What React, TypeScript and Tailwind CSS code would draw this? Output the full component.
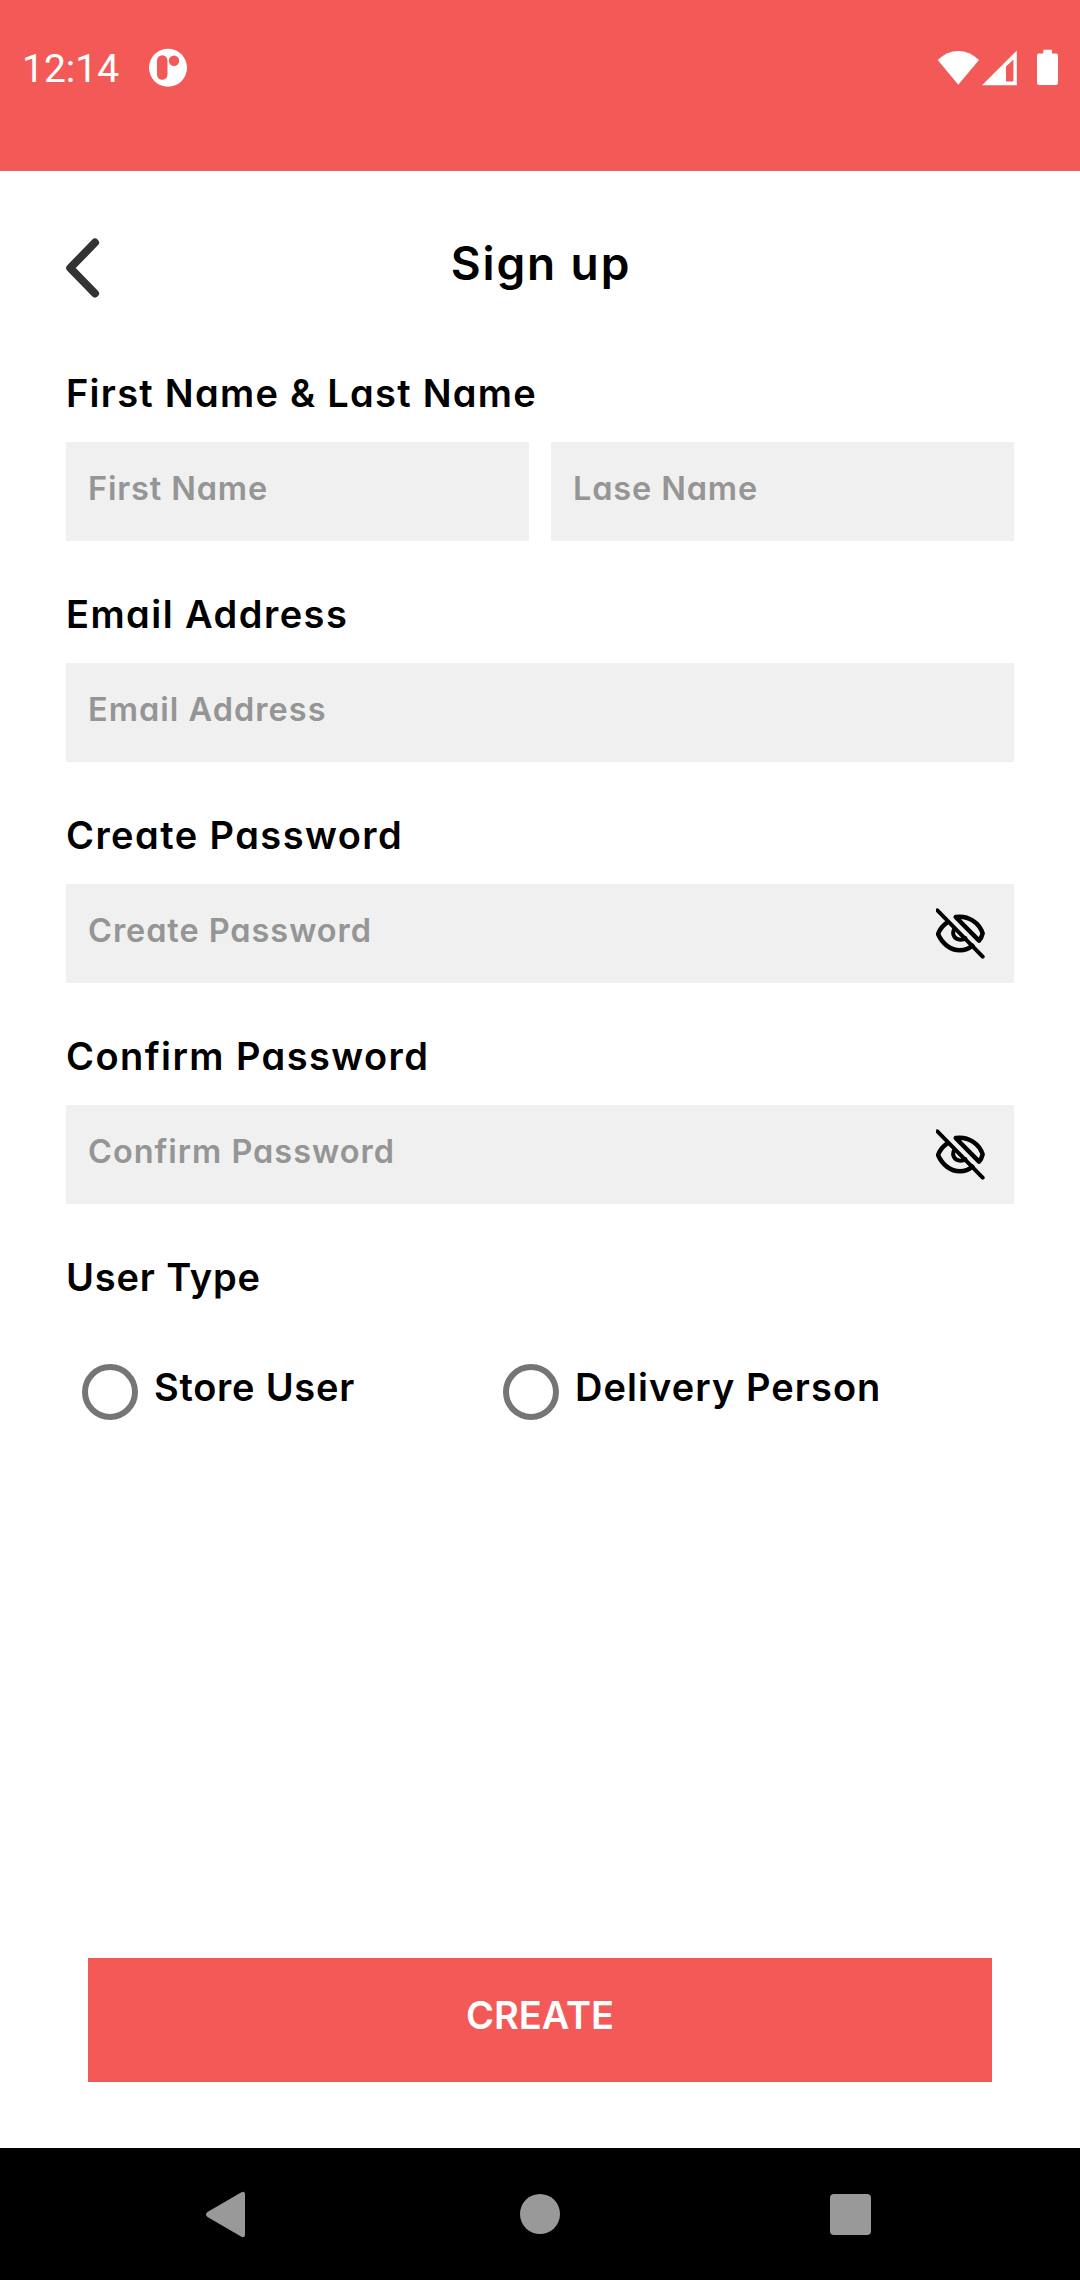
const labelBase = 'block h-14 text-[38px] leading-[56px] font-semibold text-black whitespace-nowrap';
const inputBase =
  'h-[99px] w-full min-w-0 bg-[#f0f0f0] px-[22px] pt-0 pb-[7px] text-[32.5px] font-semibold text-black placeholder:text-[#959595] placeholder:opacity-100 outline-none';

function EyeOff() {
  return (
    <svg width="50" height="52" viewBox="0 0 150 156" fill="none" stroke="#000" strokeWidth="13.5" strokeLinecap="round" strokeLinejoin="round">
      <path d="M34 43C21 52 11 64 6 78C19 108 44 127 72 127C87 127 99 122 109 113" />
      <path d="M59 27C98 21 130 45 140 76C138 85 135 92 129 98Z" />
      <path d="M55 62C46 79 56 95 73 95C80 95 85 93 88 90" strokeWidth="12" />
      <path d="M4 7L140 146" strokeWidth="12" />
    </svg>
  );
}

function Password({ label, placeholder, labelTrack, inputTrack }: { label: string; placeholder: string; labelTrack: string; inputTrack: string }) {
  return (
    <section className="flex flex-col gap-[21px]">
      <label className={`${labelBase} ${labelTrack}`}>{label}</label>
      <div className="flex h-[99px] items-center bg-[#f0f0f0] pr-[28px]">
        <input className={`${inputBase} ${inputTrack}`} placeholder={placeholder} type="text" />
        <button type="button" aria-label="Show password" className="shrink-0">
          <EyeOff />
        </button>
      </div>
    </section>
  );
}

function Radio({ text, track }: { text: string; track: string }) {
  return (
    <label className="flex w-[421px] items-center gap-4 pl-4">
      <span className="size-14 shrink-0 rounded-full border-6 border-[#757575]" />
      <span className={`${labelBase} -mt-[10px] ${track}`}>{text}</span>
    </label>
  );
}

export default function App() {
  return (
    <div className="flex h-[2280px] w-[1080px] flex-col bg-white font-[Inter,sans-serif] [font-feature-settings:'cv11']">
      <header className="h-[171px] bg-[#f35a57]">
        <div className="flex h-[135px] items-center px-[22px]">
          <span className="mt-1 font-[Roboto,sans-serif] text-[39px] leading-none text-white">12:14</span>
          <svg className="ml-[29px]" width="40" height="40" viewBox="0 0 40 40">
            <circle cx="20" cy="19.8" r="19" fill="#fff" />
            <rect x="9" y="7.2" width="10.5" height="24.5" rx="5.25" fill="#f35a57" />
            <circle cx="26" cy="12.8" r="5.2" fill="#f35a57" />
          </svg>
          <svg className="ml-auto" width="122" height="40" viewBox="936 47.500 122 40" fill="#fff">
            <path d="M958.3 84.3L937.7 59.5Q947 50.500 958.3 50.500T979 59.5Z" />
            <path fillRule="evenodd" d="M982 84.7L1016.8 50V84.7ZM1006 81H1013.4V59L1006 66Z" />
            <path d="M1043.3 49.3H1052V53H1056Q1058 53 1058 55V82.5Q1058 84.5 1056 84.5H1039Q1037 84.5 1037 82.5V55Q1037 53 1039 53H1043.3Z" />
          </svg>
        </div>
      </header>

      <main className="flex flex-1 flex-col px-[66px] pt-[56px]">
        <div className="grid h-16 grid-cols-[1fr_auto_1fr] items-center">
          <svg className="mt-[11px]" width="34" height="60" viewBox="0 0 34 60" fill="none" stroke="#333" strokeWidth="8" strokeLinecap="round" strokeLinejoin="round">
            <path d="M29 4.5L4.2 30L29 55.5" />
          </svg>
          <h1 className="pl-[2px] text-[46px] leading-[64px] font-semibold tracking-[1.88px] text-black">Sign up</h1>
        </div>

        <form className="mt-[74px] flex flex-1 flex-col gap-[45px]">
          <section className="flex flex-col gap-[21px]">
            <label className={`${labelBase} tracking-[1.27px]`}>First Name &amp; Last Name</label>
            <div className="grid grid-cols-2 gap-[22px]">
              <input className={`${inputBase} tracking-[0.85px]`} placeholder="First Name" />
              <input className={`${inputBase} tracking-[0.85px]`} placeholder="Lase Name" />
            </div>
          </section>
          <section className="flex flex-col gap-[21px]">
            <label className={`${labelBase} tracking-[1.45px]`}>Email Address</label>
            <input className={`${inputBase} tracking-[1.02px]`} placeholder="Email Address" />
          </section>
          <Password label="Create Password" placeholder="Create Password" labelTrack="tracking-[1.43px]" inputTrack="tracking-[0.93px]" />
          <Password label="Confirm Password" placeholder="Confirm Password" labelTrack="tracking-[1.42px]" inputTrack="tracking-[0.97px]" />
          <section className="flex flex-col gap-[59px]">
            <span className={`${labelBase} tracking-[0.85px]`}>User Type</span>
            <div className="flex">
              <Radio text="Store User" track="tracking-[0.74px]" />
              <Radio text="Delivery Person" track="tracking-[1.06px]" />
            </div>
          </section>
          <button type="button" className="mx-[22px] mt-auto mb-[66px] h-[124px] bg-[#f35a57] pb-[9px] text-[38px] font-semibold text-white">
            CREATE
          </button>
        </form>
      </main>

      <nav className="h-[132px] bg-black">
        <svg width="1080" height="132" viewBox="0 0 1080 132" fill="#999">
          <path d="M207.5 64Q204.500 66.500 207.500 69L241 88.500Q245 90.500 245 86.500V46.500Q245 42.500 241 44.500Z" />
          <circle cx="540" cy="66" r="20" />
          <rect x="830" y="46" width="41" height="41" rx="4" />
        </svg>
      </nav>
    </div>
  );
}
